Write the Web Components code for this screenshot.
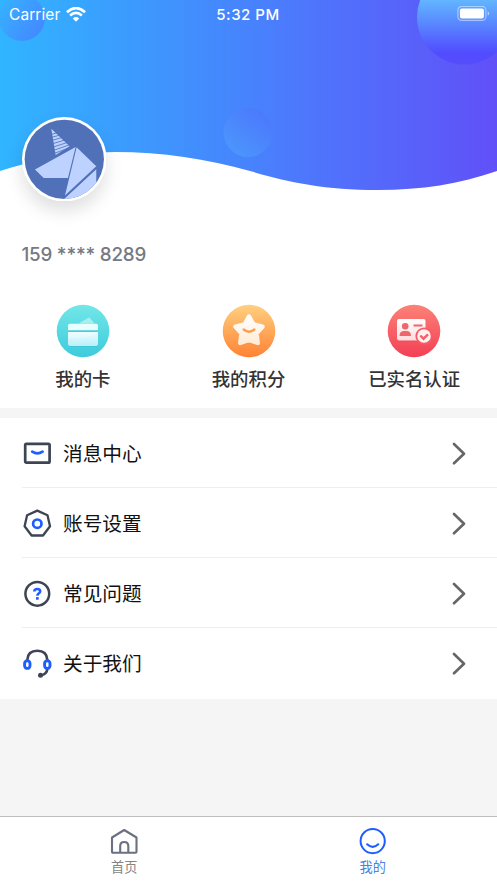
<!DOCTYPE html>
<html lang="zh-CN">
<head>
<meta charset="utf-8">
<title>我的</title>
<style>
html,body{margin:0;height:100%;background:#f5f5f5}
body{font-family:Inter,"Noto Sans CJK SC",sans-serif}
</style>
</head>
<body>
<profile-page></profile-page>
<script>
function define(name, html) {
  const t = document.createElement('template');
  t.innerHTML = html;
  customElements.define(name, class extends HTMLElement {
    constructor() {
      super();
      this.attachShadow({ mode: 'open' }).appendChild(t.content.cloneNode(true));
    }
  });
}

define('status-bar', `
<style>
:host{display:grid;grid-template-columns:1fr auto 1fr;align-items:center;height:28px;padding:0 7px 0 9px;color:#fff;font:400 15.5px/28px Inter,sans-serif}
.l{display:flex;align-items:center;gap:5.500px;letter-spacing:.08px}
.l span{padding-top:1px;line-height:27px}
.t{font-weight:500;font-size:15px;letter-spacing:.52px;margin:0 3px 0 0;padding-top:1px;line-height:27px}
.r{display:flex;justify-content:flex-end}
svg{display:block}
</style>
<div class="l"><span>Carrier</span><svg width="20" height="15" viewBox="0 0 20 15" fill="none" stroke="#fff" stroke-width="2.700"><path d="M.9 5.2Q10-3 19.100 5.200M4.100 8.600Q10 3.200 15.900 8.600"/><path d="M10 14.700 6.800 11.400Q10 8.600 13.200 11.400Z" fill="#fff" stroke="none"/></svg></div>
<span class="t">5:32 PM</span>
<div class="r"><svg width="33" height="16" viewBox="0 0 33 16"><rect x=".9" y=".4" width="28" height="14" rx="3.800" fill="none" stroke="#fff" stroke-opacity=".45" stroke-width="1.200"/><rect x="2.900" y="2.400" width="24" height="10" rx="2" fill="#fff"/><path d="M30.700 5.300q1.600.7 1.600 2.200t-1.600 2.200z" fill="#fff" opacity=".5"/></svg></div>`);

define('wave-banner', `
<style>
:host{display:block;position:relative;height:200px}
.bg{position:absolute;inset:0;display:block}
::slotted(*){position:relative}
</style>
<svg class="bg" width="497" height="200" viewBox="0 0 497 200">
<defs>
<linearGradient id="g"><stop offset="0" stop-color="#30b5ff"/><stop offset=".5" stop-color="#4783fd"/><stop offset=".72" stop-color="#536cfb"/><stop offset="1" stop-color="#6150f8"/></linearGradient>
<linearGradient id="a" x1=".1" y1=".25" x2=".85" y2=".75"><stop offset="0" stop-color="#37aeff"/><stop offset="1" stop-color="#438cff"/></linearGradient>
<linearGradient id="b" x1="0" y1="0" x2="0" y2="1"><stop offset=".3" stop-color="#63b9ff"/><stop offset=".55" stop-color="#5a8bff"/><stop offset=".88" stop-color="#514cff"/><stop offset="1" stop-color="#554dfd"/></linearGradient>
<linearGradient id="c" x1=".2" y1=".8" x2=".8" y2=".1"><stop offset="0" stop-color="#4b93fd"/><stop offset="1" stop-color="#4c79fc"/></linearGradient>
</defs>
<path fill="#fff" d="M0 140H497V200H0Z"/>
<path fill="url(#g)" d="M0 0H497V171C459 184 422 190 378 190C324 190 288 182 250 171C207 159 162 152 115 152C70 152 32 161 0 171Z"/>
<circle cx="22" cy="18" r="23" fill="url(#a)"/>
<circle cx="464.500" cy="17" r="47.500" fill="url(#b)"/>
<circle cx="248" cy="132.500" r="24.500" fill="url(#c)"/>
</svg>
<slot></slot>`);

define('user-avatar', `
<style>
:host{display:block;width:84.600px;height:84.600px;border-radius:50%;box-shadow:0 10px 18px rgba(0,0,0,.13)}
svg{display:block}
</style>
<svg width="84.600" height="84.600" viewBox="65 49 254 254">
<clipPath id="k"><circle cx="192" cy="176" r="119"/></clipPath>
<circle cx="192" cy="176" r="127" fill="#fff"/>
<g clip-path="url(#k)"><path fill="#5071b8" d="M65 49h254v254H65z"/>
<g fill="#bdd2ff"><path d="M104 207 226 139 203 232H130ZM229 140 288 197 194 285ZM288 206V245L291 260V303H180L194 293Z"/>
<path d="M153 84 208 137 166 163Z"/></g>
<path stroke="#5071b8" stroke-width="2.500" d="M150 102 176 95M150 111 184 102M152 120 191 109M154 130 198 117M156 140 203 125M158 150 206 133M160 159 211 140"/>
</g></svg>`);

define('quick-action', `
<style>
:host{flex:1;display:flex;flex-direction:column;align-items:center;font:500 18.400px/28px "Noto Sans CJK SC",sans-serif;color:#333;gap:6px}
::slotted(svg){display:block}
</style>
<slot name="icon"></slot><span><slot></slot></span>`);

define('menu-item', `
<style>
:host{display:block;background:#fff;padding-left:22px}
.row{display:flex;align-items:center;height:70px;box-sizing:border-box;border-bottom:1.500px solid var(--row-line,#eee);padding-right:29px;font:400 19.700px/30px "Noto Sans CJK SC",sans-serif;color:#111}
.label{flex:1;margin-left:11px}
::slotted(svg),svg{display:block}
</style>
<div class="row"><slot name="icon"></slot><span class="label"><slot></slot></span>
<svg width="18" height="24" viewBox="0 0 18 24" fill="none" stroke="#666" stroke-width="2.600" stroke-linecap="round" stroke-linejoin="round"><path d="M4 3 14 12.700 4 22.300"/></svg></div>`);

define('tab-item', `
<style>
:host{flex:1;display:flex;flex-direction:column;align-items:center;padding-top:9px;font:400 13.200px/20px "Noto Sans CJK SC",sans-serif}
::slotted(svg){display:block}
span{margin-top:1px}
</style>
<slot name="icon"></slot><span><slot></slot></span>`);

define('profile-page', `
<style>
:host{display:flex;flex-direction:column;width:497px;height:883px;background:#f5f5f5;overflow:hidden}
.card{background:#fff;height:408px;box-sizing:border-box}
user-avatar{margin:88.700px 0 0 21.700px}
.phone{margin:40px 0 0 21.500px;font:500 18.800px/30px Inter,sans-serif;color:#757983;letter-spacing:-.22px;white-space:nowrap}
.actions{display:flex;margin-top:34px}
.menu{margin-top:10px;background:#fff;height:281px}
menu-item:last-child{--row-line:transparent}
.tabs{margin-top:auto;display:flex;height:66px;box-sizing:content-box;border-top:1px solid #bdbdbd;background:#fff}
</style>
<div class="card">
<wave-banner><status-bar></status-bar><user-avatar></user-avatar></wave-banner>
<div class="phone">159 **** 8289</div>
<div class="actions">
<quick-action><svg slot="icon" width="54" height="54" viewBox="0 0 54 54">
<defs><linearGradient id="t" x2="0" y2="1"><stop stop-color="#72e7e8"/><stop offset="1" stop-color="#3dcbdc"/></linearGradient><linearGradient id="tw" x2="0" y2="1"><stop stop-color="#eafdff"/><stop offset="1" stop-color="#b9effa"/></linearGradient></defs>
<circle cx="27" cy="27" r="26.300" fill="url(#t)"/><path d="M22.500 19.500 33.300 13.200 38.600 19.500Z" fill="#a5f0ef"/>
<rect x="12" y="21" width="30" height="22" rx="2.500" fill="#31b8cf" opacity=".35"/>
<path d="M12 26.200V21.500Q12 19.800 14 19.800H40Q42 19.800 42 21.500V26.200Z" fill="#e9feff"/><path d="M12 28H42V40Q42 42 40 42H14Q12 42 12 40Z" fill="url(#tw)"/><path d="M12 28H42Q34 35 12 35Z" fill="#fff" opacity=".22"/></svg>我的卡</quick-action>
<quick-action><svg slot="icon" width="54" height="54" viewBox="0 0 54 54">
<defs><linearGradient id="o" x2="0" y2="1"><stop stop-color="#ffd080"/><stop offset="1" stop-color="#ff8234"/></linearGradient><linearGradient id="ow" x2="0" y2="1"><stop stop-color="#fff"/><stop offset="1" stop-color="#ffecd7"/></linearGradient></defs>
<circle cx="27" cy="27" r="26.300" fill="url(#o)"/>
<path d="M27 12.500 31.500 20.500 40.500 22.800 34.500 29.500 35.700 39 27 35.800 18.300 39 19.500 29.500 13.500 22.800 22.500 20.500Z" transform="translate(0 1)" fill="#f98335" opacity=".3" stroke="#f98335" stroke-width="4.500" stroke-linejoin="round"/>
<path d="M27 12.500 31.500 20.500 40.500 22.800 34.500 29.500 35.700 39 27 35.800 18.300 39 19.500 29.500 13.500 22.800 22.500 20.500Z" fill="url(#ow)" stroke="url(#ow)" stroke-width="4.500" stroke-linejoin="round"/>
<path d="M21.700 25.500Q27 29.800 32.300 25.500" fill="none" stroke="#ff9d4d" stroke-width="2.400" stroke-linecap="round"/></svg>我的积分</quick-action>
<quick-action><svg slot="icon" width="54" height="54" viewBox="0 0 54 54">
<defs><linearGradient id="r" x2="0" y2="1"><stop stop-color="#fc8277"/><stop offset="1" stop-color="#f33f55"/></linearGradient><linearGradient id="rw" x2="0" y2="1"><stop stop-color="#fff"/><stop offset="1" stop-color="#ffdcdc"/></linearGradient></defs>
<circle cx="27" cy="27" r="26.300" fill="url(#r)"/><rect x="10" y="16" width="28.500" height="21.500" rx="2" fill="#dd3d4e" opacity=".3"/>
<rect x="10" y="15" width="28.500" height="21.500" rx="2" fill="url(#rw)"/>
<circle cx="18.200" cy="22.300" r="3.300" fill="#f0656a"/><path d="M12.500 32Q12.500 27 17 27H19.500Q24 27 24 32Z" fill="#f0656a"/><path d="M26.500 21.500H35.500" stroke="#f0656a" stroke-width="2"/>
<circle cx="37" cy="32" r="8.600" fill="#f65b67"/><circle cx="37" cy="32" r="6.800" fill="#fff0f0"/><path d="M33.300 31.500 36.500 34.700 41 30.300" fill="none" stroke="#f4606a" stroke-width="2.400"/></svg>已实名认证</quick-action>
</div></div>
<div class="menu">
<menu-item><svg slot="icon" width="30" height="30" viewBox="0 0 30 30" fill="none" stroke-width="2.700"><rect x="3.200" y="5.800" width="24.400" height="18.800" rx="1.200" stroke="#3d4453"/><path d="M10.200 13.700Q15.400 17 20.600 13.700" stroke="#1e5eff" stroke-linecap="round"/></svg>消息中心</menu-item>
<menu-item><svg slot="icon" width="30" height="30" viewBox="0 0 30 30" fill="none"><path d="M15.300 2.600 25.500 7.200 28 18.200 21 27.500H9.600L2.600 18.200 5.100 7.200Z" stroke="#3d4453" stroke-width="2.300" stroke-linejoin="round"/><circle cx="15.300" cy="15.700" r="4.200" stroke="#1e5eff" stroke-width="2.700"/></svg>账号设置</menu-item>
<menu-item><svg slot="icon" width="30" height="30" viewBox="0 0 30 30" fill="none"><circle cx="15.300" cy="15.800" r="11.900" stroke="#3d4453" stroke-width="2.500"/><path d="M12.300 13.500Q12.300 11 15.400 11 18.200 11 18.200 13.300 18.200 14.500 16.800 15.300 15.400 16 15.400 17.700" stroke="#1e5eff" stroke-width="2.600"/><path d="M14 19.100H16.700V21.700H14Z" fill="#1e5eff"/></svg>常见问题</menu-item>
<menu-item><svg slot="icon" width="30" height="30" viewBox="0 0 30 30" fill="none"><path d="M5.300 13V11.800Q5.800 2.800 15.300 2.800T25.300 11.800V13M25.300 21Q25 26 19 27.300" stroke="#3d4453" stroke-width="2.600"/><circle cx="18.500" cy="27.200" r="2.500" fill="#3d4453"/><rect x="2.600" y="12.800" width="5.400" height="7.600" rx="2.700" stroke="#1e5eff" stroke-width="2.900"/><rect x="22.600" y="12.800" width="5.400" height="7.600" rx="2.700" stroke="#1e5eff" stroke-width="2.900"/></svg>关于我们</menu-item>
</div>
<div class="tabs">
<tab-item style="color:#858585"><svg slot="icon" width="30" height="30" viewBox="0 0 30 30" fill="none" stroke="#697080" stroke-width="2.100" stroke-linejoin="round"><path d="M3 11.500 15.200 4 27.500 11.500V25.800Q27.500 26.800 26.500 26.800H4Q3 26.800 3 25.800Z"/><path d="M11.200 26.300V20Q11.200 16 15.200 16T19.300 20V26.300"/></svg>首页</tab-item>
<tab-item style="color:#4c80e6"><svg slot="icon" width="30" height="30" viewBox="0 0 30 30" fill="none" stroke="#1e5eff" stroke-width="2"><circle cx="14.700" cy="15.100" r="12.100"/><path d="M9.200 18.300Q14.700 23.400 20.200 18.300" stroke-width="2.200" stroke-linecap="round"/></svg>我的</tab-item>
</div>`);
</script>
</body>
</html>
